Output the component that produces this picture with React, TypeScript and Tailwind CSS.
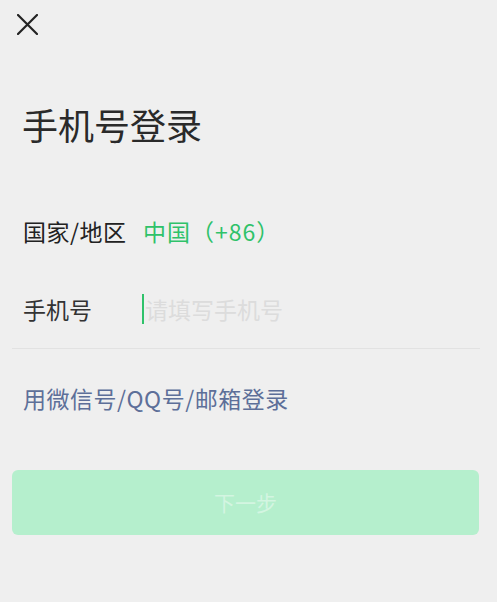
const FONT = { fontFamily: '"Noto Sans CJK SC", "Noto Sans", sans-serif' };

export default function App() {
  return (
    <div className="h-[602px] w-[497px] bg-[#efefef] text-[#1f1f1f]" style={FONT}>
      <div className="flex h-[48px] items-center pl-[17px]">
        <svg width="21" height="21" viewBox="0 0 21 21" aria-hidden="true">
          <path d="M1 1L20 20M20 1L1 20" stroke="#222" strokeWidth="2.2" strokeLinecap="round" />
        </svg>
      </div>

      <h1 className="mt-[54px] pl-[22px] text-[36px] leading-[44px] font-normal text-[#2a2a2a]">手机号登录</h1>

      <div className="mt-[70px] flex items-center pl-[23px] text-[23px] leading-[30px]">
        <span className="w-[120px] tracking-[0.5px] text-[#222]">国家/地区</span>
        <span className="tracking-[1px] text-[#2fc26a]">中国（+86）</span>
      </div>

      <div className="mt-[48px] flex items-center pl-[23px] pr-[17px] text-[23px] leading-[30px]">
        <span className="w-[119px] text-[#333]">手机号</span>
        <span className="h-[30px] w-[2px] bg-[#2fc26a]" />
        <span className="pl-[1px] text-[#dcdcdc]">请填写手机号</span>
      </div>

      <div className="mx-[12px] mt-[24px] h-px w-[468px] bg-[#e2e2e2]" />

      <div className="mt-[34px] pl-[23px] text-[23px] leading-[30px] tracking-[0.5px] text-[#5d6f99]">
        用微信号/QQ号/邮箱登录
      </div>

      <button
        className="mx-[12px] mt-[57px] flex h-[65px] w-[467px] items-center justify-center rounded-[6px] bg-[#b5efcd] text-[21px] text-[#d3f5e1]"
        style={FONT}
      >
        下一步
      </button>
    </div>
  );
}
